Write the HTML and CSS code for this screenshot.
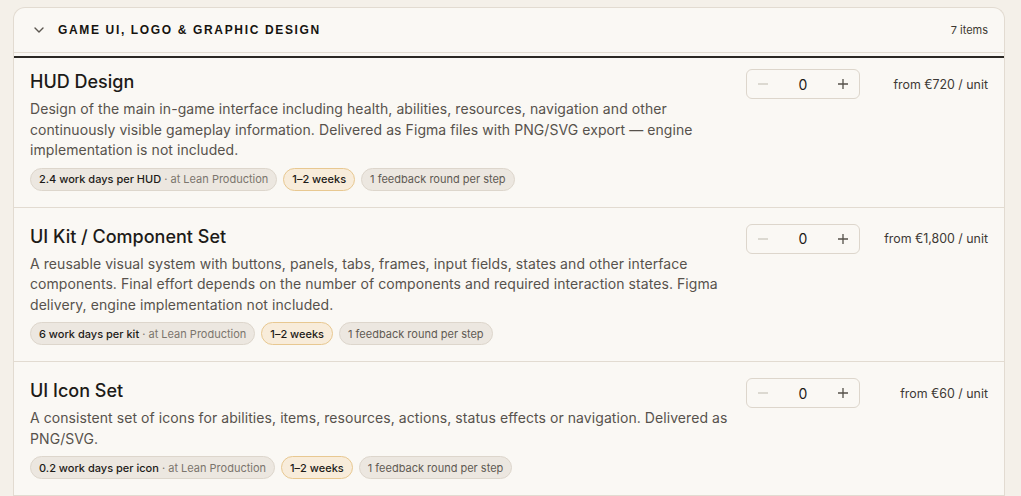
FILE: index.html
```html
<!DOCTYPE html>
<html lang="en">
<head>
    <meta charset="UTF-8">
    <meta name="viewport" content="width=device-width, initial-scale=1.0">
    <title>Services | Game UI, Logo &amp; Graphic Design</title>
    <link rel="stylesheet" href="styles.css">
</head>
<body>
    <section class="category">
        <header class="category-header">
            <svg class="chevron" width="10" height="6" viewBox="0 0 10 6" fill="none">
                <path d="M1 1l4 4 4-4" stroke="currentColor" stroke-width="1.4" stroke-linecap="round" stroke-linejoin="round"/>
            </svg>
            <h2>Game UI, Logo &amp; Graphic Design</h2>
            <span class="count">7 items</span>
        </header>
        <div class="progress"></div>

        <div class="item">
            <div class="item-main">
                <h3>HUD Design</h3>
                <p>Design of the main in-game interface including health, abilities, resources, navigation and other continuously visible gameplay information. Delivered as Figma files with PNG/SVG export — engine implementation is not included.</p>
                <div class="tags">
                    <span class="tag"><b>2.4 work days per HUD</b> · at Lean Production</span>
                    <span class="tag tag-time">1–2 weeks</span>
                    <span class="tag tag-muted">1 feedback round per step</span>
                </div>
            </div>
            <div class="item-side">
                <div class="stepper">
                    <button class="step" disabled><svg width="12" height="12" viewBox="0 0 12 12"><path d="M1 6h10"/></svg></button>
                    <span class="qty">0</span>
                    <button class="step"><svg width="12" height="12" viewBox="0 0 12 12"><path d="M1 6h10M6 1v10"/></svg></button>
                </div>
                <span class="price">from €720 / unit</span>
            </div>
        </div>

        <div class="item">
            <div class="item-main">
                <h3>UI Kit / Component Set</h3>
                <p>A reusable visual system with buttons, panels, tabs, frames, input fields, states and other interface components. Final effort depends on the number of components and required interaction states. Figma delivery, engine implementation not included.</p>
                <div class="tags">
                    <span class="tag"><b>6 work days per kit</b> · at Lean Production</span>
                    <span class="tag tag-time">1–2 weeks</span>
                    <span class="tag tag-muted">1 feedback round per step</span>
                </div>
            </div>
            <div class="item-side">
                <div class="stepper">
                    <button class="step" disabled><svg width="12" height="12" viewBox="0 0 12 12"><path d="M1 6h10"/></svg></button>
                    <span class="qty">0</span>
                    <button class="step"><svg width="12" height="12" viewBox="0 0 12 12"><path d="M1 6h10M6 1v10"/></svg></button>
                </div>
                <span class="price">from €1,800 / unit</span>
            </div>
        </div>

        <div class="item">
            <div class="item-main">
                <h3>UI Icon Set</h3>
                <p>A consistent set of icons for abilities, items, resources, actions, status effects or navigation. Delivered as PNG/SVG.</p>
                <div class="tags">
                    <span class="tag"><b>0.2 work days per icon</b> · at Lean Production</span>
                    <span class="tag tag-time">1–2 weeks</span>
                    <span class="tag tag-muted">1 feedback round per step</span>
                </div>
            </div>
            <div class="item-side">
                <div class="stepper">
                    <button class="step" disabled><svg width="12" height="12" viewBox="0 0 12 12"><path d="M1 6h10"/></svg></button>
                    <span class="qty">0</span>
                    <button class="step"><svg width="12" height="12" viewBox="0 0 12 12"><path d="M1 6h10M6 1v10"/></svg></button>
                </div>
                <span class="price">from €60 / unit</span>
            </div>
        </div>
    </section>
</body>
</html>
```

FILE: styles.css
```css
:root {
    --page-bg: #f4f0e9;
    --card-bg: #faf8f4;
    --border: #e2dbd1;
    --text-dark: #1d1b18;
    --text-body: #57524c;
    --text-soft: #7b756d;
    --tag-bg: #ece7e0;
    --tag-border: #ddd6cc;
    --time-bg: #f8ecda;
    --time-border: #e8c891;
}

* {
    margin: 0;
    padding: 0;
    box-sizing: border-box;
}

body {
    background: var(--page-bg);
    font-family: Inter, 'Noto Sans', sans-serif;
    color: var(--text-dark);
    padding: 7px 16px 0 13px;
}

.category {
    background: var(--card-bg);
    border: 1px solid var(--border);
    border-bottom: none;
    border-radius: 12px 12px 0 0;
}

.category-header {
    display: flex;
    align-items: center;
    height: 45px;
    padding: 0 16px 0 20px;
    border-bottom: 1px solid var(--border);
}

.chevron {
    color: #5c5750;
    margin-right: 14px;
}

.category-header h2 {
    flex: 1;
    font-family: 'Liberation Sans', Arial, sans-serif;
    font-size: 12px;
    font-weight: 700;
    letter-spacing: 1.65px;
    text-transform: uppercase;
    color: #15130f;
}

.count {
    font-size: 11px;
    color: #3c3833;
}

/* dark rule under the header */
.progress {
    height: 2px;
    background: #2b2824;
    margin: 3px 0 -5px;
}

.item {
    display: flex;
    gap: 16px;
    padding: 16px;
    border-bottom: 1px solid var(--border);
}

.item-main {
    flex: 1;
}

.item-main h3 {
    font-size: 18px;
    font-weight: 500;
    line-height: 26px;
    color: var(--text-dark);
}

.item-main p {
    margin-top: 4px;
    font-size: 14px;
    line-height: 20.5px;
    letter-spacing: 0.07px;
    color: var(--text-body);
}

.tags {
    display: flex;
    gap: 6px;
    margin-top: 7px;
}

.tag {
    display: inline-flex;
    align-items: center;
    height: 23px;
    padding: 0 8px;
    border-radius: 999px;
    background: var(--tag-bg);
    border: 1px solid var(--tag-border);
    font-size: 11px;
    color: var(--text-soft);
    white-space: pre;
}

.tag b {
    font-weight: 500;
    color: var(--text-dark);
}

.tag-time {
    background: var(--time-bg);
    border-color: var(--time-border);
    color: var(--text-dark);
    font-weight: 500;
}

.tag-muted {
    color: #5f5a53;
}

.item-side {
    display: flex;
    align-items: center;
    align-self: flex-start;
    gap: 16px;
}

.stepper {
    display: flex;
    align-items: center;
    width: 114px;
    height: 30px;
    border: 1px solid var(--tag-border);
    border-radius: 6px;
    background: var(--card-bg);
}

.step {
    display: flex;
    align-items: center;
    justify-content: center;
    width: 32px;
    height: 100%;
    border: none;
    background: none;
    color: #55504a;
    cursor: pointer;
}

.step svg {
    stroke: currentColor;
    stroke-width: 1.3;
    fill: none;
}

.step:disabled {
    color: #cdc7bf;
    cursor: default;
}

.qty {
    flex: 1;
    text-align: center;
    font-size: 14px;
    color: var(--text-dark);
}

.price {
    width: 112px;
    text-align: right;
    font-size: 12.4px;
    color: #3d3934;
}
```
